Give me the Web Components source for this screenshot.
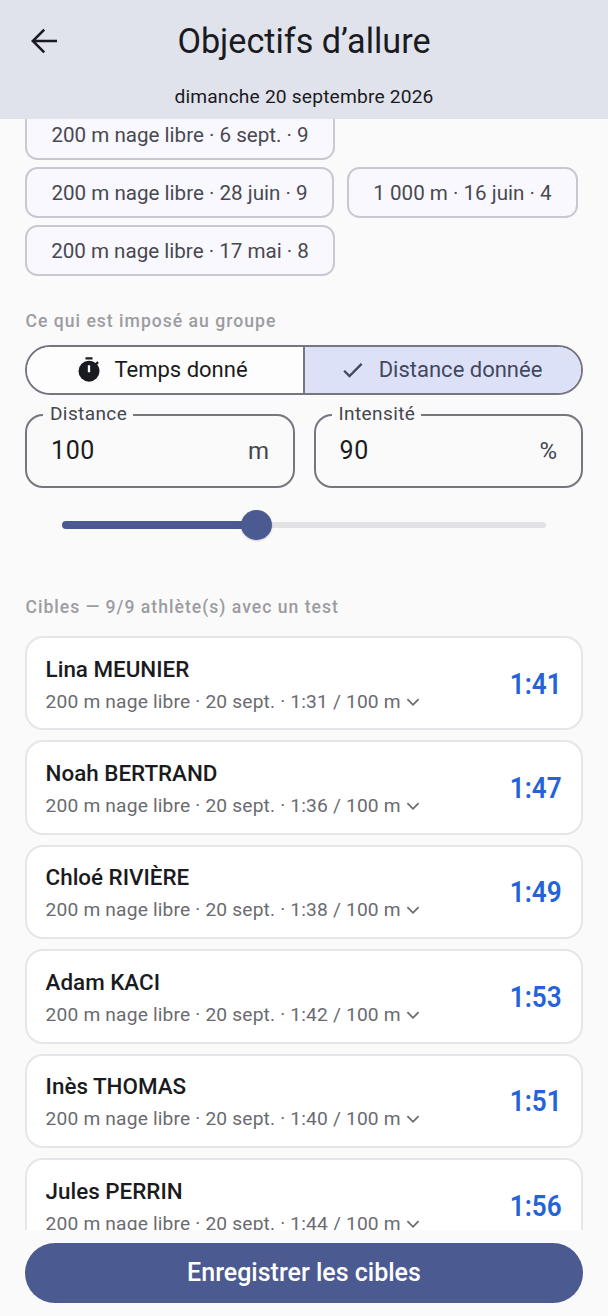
<!DOCTYPE html>
<html lang="fr"><head><meta charset="utf-8"><title>Objectifs d’allure</title>
<style>
html,body{margin:0;padding:0;height:100%;background:#fafafa;font-family:Roboto,"Liberation Sans",sans-serif;}
body{overflow:hidden}
</style></head><body>
<pace-screen>
  <pace-appbar slot="top" heading="Objectifs d’allure" sub="dimanche 20 septembre 2026"></pace-appbar>
  <chip-wrap>
    <test-chip w="310">200 m nage libre · 6 sept. · 9</test-chip>
    <test-chip w="309">200 m nage libre · 28 juin · 9</test-chip>
    <test-chip w="231">1 000 m · 16 juin · 4</test-chip>
    <test-chip w="310">200 m nage libre · 17 mai · 8</test-chip>
  </chip-wrap>
  <sec-label style="margin-top:33px">Ce qui est imposé au groupe</sec-label>
  <seg-toggle></seg-toggle>
  <field-row>
    <out-field label="Distance" value="100" unit="m"></out-field>
    <out-field label="Intensité" value="90" unit="%"></out-field>
  </field-row>
  <pace-slider></pace-slider>
  <sec-label style="margin-top:55px">Cibles — 9/9 athlète(s) avec un test</sec-label>
  <card-list>
    <athlete-card name="Lina MEUNIER" info="200 m nage libre · 20 sept. · 1:31 / 100 m" target="1:41"></athlete-card>
    <athlete-card name="Noah BERTRAND" info="200 m nage libre · 20 sept. · 1:36 / 100 m" target="1:47"></athlete-card>
    <athlete-card name="Chloé RIVIÈRE" info="200 m nage libre · 20 sept. · 1:38 / 100 m" target="1:49"></athlete-card>
    <athlete-card name="Adam KACI" info="200 m nage libre · 20 sept. · 1:42 / 100 m" target="1:53"></athlete-card>
    <athlete-card name="Inès THOMAS" info="200 m nage libre · 20 sept. · 1:40 / 100 m" target="1:51"></athlete-card>
    <athlete-card name="Jules PERRIN" info="200 m nage libre · 20 sept. · 1:44 / 100 m" target="1:56"></athlete-card>
  </card-list>
  <save-button slot="bottom">Enregistrer les cibles</save-button>
</pace-screen>
<script>
const def=(tag,css,html,init)=>{customElements.define(tag,class extends HTMLElement{
  connectedCallback(){ if(this.shadowRoot)return; const r=this.attachShadow({mode:'open'});
    const a=n=>this.getAttribute(n)||'';
    r.innerHTML='<style>'+css+'</style>'+(typeof html==='function'?html(a):html);
    if(init)init(this,r);}
});};
def('pace-screen',`
:host{display:flex;flex-direction:column;height:1316px;width:608px;overflow:hidden;background:#fafafa}
.scroll{flex:1;min-height:0;overflow:hidden}
.inner{margin-top:-10px;padding:0 25px;display:flex;flex-direction:column}
.foot{height:86px;flex:none;box-sizing:border-box;padding:13px 25px 0}
`,`<slot name="top"></slot><div class="scroll"><div class="inner"><slot></slot></div></div><div class="foot"><slot name="bottom"></slot></div>`);
def('pace-appbar',`
:host{display:block;height:119px;flex:none;background:#e0e2ec;color:#1a1b21;position:relative}
.row{height:82px;display:flex;align-items:center;position:relative}
.back{width:26px;height:26px;margin-left:31px;flex:none;display:block}
h1{position:absolute;left:0;right:0;top:0;margin:0;text-align:center;font:400 34.2px/82px Roboto,sans-serif}
p{margin:1px 0 0;text-align:center;font:400 19.2px/28px Roboto,sans-serif;letter-spacing:.18px}
`,a=>`<div class="row"><h1>${a('heading')}</h1><svg class="back" viewBox="0 0 26 26"><path d="M26 13H2.6M13.2 1.6 1.8 13l11.4 11.4" fill="none" stroke="#1a1b21" stroke-width="2.6"/></svg></div><p>${a('sub')}</p>`);
def('chip-wrap',`:host{display:flex;flex-wrap:wrap;column-gap:13px;row-gap:7px}`,`<slot></slot>`);
def('test-chip',`
:host{display:flex;align-items:center;justify-content:center;box-sizing:border-box;height:51px;background:#f9f8ff;border:2px solid #c8c8d0;border-radius:12.5px;color:#48494f;font:400 20.6px/28px Roboto,sans-serif}
`,`<slot></slot>`,(el)=>{el.style.width=el.getAttribute('w')+'px'});
def('sec-label',`:host{display:block;font:500 17.6px/24px Roboto,sans-serif;letter-spacing:1px;color:#9c9ca1;padding-left:.5px}`,`<slot></slot>`);
def('seg-toggle',`
:host{display:flex;height:50px;margin-top:12px;box-sizing:border-box;border:2px solid #767680;border-radius:25px;overflow:hidden;font:400 22px/28px Roboto,sans-serif}
div{flex:1;display:flex;align-items:center;justify-content:center;box-sizing:border-box}
.a{color:#1a1b21;background:#fdfdfd;border-right:2px solid #767680;flex:0 0 278px;gap:11px;padding-right:7px}
.b{color:#41485f;background:#dde1f8;gap:12px;padding-right:5px}
svg{display:block;flex:none}
`,`<div class="a"><svg width="28" height="28" viewBox="0 0 24 24"><path fill="#1a1b21" d="M15 1H9v2h6V1zm4.03 6.39 1.42-1.42c-.43-.51-.9-.99-1.41-1.41l-1.42 1.42A8.96 8.96 0 0 0 12 4a9 9 0 1 0 9 9c0-2.12-.74-4.07-1.97-5.61zM13 14h-2V8h2v6z"/></svg>Temps donné</div><div class="b"><svg width="28" height="28" viewBox="0 0 24 24"><path fill="none" stroke="#41485f" stroke-width="2" d="M4.4 12.6 9 17.2 19.4 6.8"/></svg>Distance donnée</div>`);
def('field-row',`:host{display:grid;grid-template-columns:270px 269.5px;column-gap:18.5px;margin-top:19px}`,`<slot></slot>`);
def('out-field',`
:host{display:flex;align-items:center;justify-content:space-between;position:relative;box-sizing:border-box;height:74px;border:2px solid #767680;border-radius:18px;padding:0 24px 0 24px;color:#1a1b21;font:400 25px/32px Roboto,sans-serif;letter-spacing:.6px}
label{position:absolute;left:16px;top:-14px;padding:0 6px 0 7px;background:#fafafa;font:400 19px/24px Roboto,sans-serif;letter-spacing:.4px;color:#44464f}
.u{color:#44464f;font-size:24px;letter-spacing:0}
`,a=>`<label>${a('label')}</label><span>${a('value')}</span><span class="u">${a('unit')}</span>`);
def('pace-slider',`
:host{display:flex;align-items:center;height:30px;margin:22px 37px 0;position:relative}
.on{width:195px;height:8px;background:#4b5a91;border-radius:4px 0 0 4px;flex:none}
.off{flex:1;height:6px;background:#e2e2e6;border-radius:0 3px 3px 0}
.t{position:absolute;left:178.5px;top:0;width:31px;height:30px;border-radius:50%;background:#4b5a91;box-shadow:0 1px 2px rgba(0,0,0,.18)}
`,`<div class="on"></div><div class="off"></div><div class="t"></div>`);
def('card-list',`:host{display:flex;flex-direction:column;gap:10px;margin-top:17px}`,`<slot></slot>`);
def('athlete-card',`
:host{display:flex;align-items:center;justify-content:space-between;box-sizing:border-box;height:94.4px;padding:0 19px 0 18.6px;background:#fff;border:2px solid #e6e6ea;border-radius:18px}
.l{margin-top:2px}
.n{font:500 22.4px/30px Roboto,sans-serif;color:#1a1b21;}
.i{display:flex;align-items:center;font:400 19.2px/26px Roboto,sans-serif;color:#6a6b70;margin-top:5px;letter-spacing:.17px}
.i svg{margin-left:3px;display:block}
.t{font:600 29px/36px Roboto,sans-serif;color:#2563d8;transform:scaleX(.9);transform-origin:100% 50%;margin-top:1px}
`,a=>`<div class="l"><div class="n">${a('name')}</div><div class="i">${a('info')}<svg width="18" height="18" viewBox="0 0 18 18"><path d="M3.4 6.2 9 11.8 14.6 6.2" fill="none" stroke="#6a6b70" stroke-width="1.8"/></svg></div></div><div class="t">${a('target')}</div>`);
def('save-button',`
:host{display:flex;align-items:center;justify-content:center;height:60px;border-radius:30px;background:#4b5a91;color:#fff;font:500 25px/30px Roboto,sans-serif}
`,`<slot></slot>`);
</script>
</body></html>
